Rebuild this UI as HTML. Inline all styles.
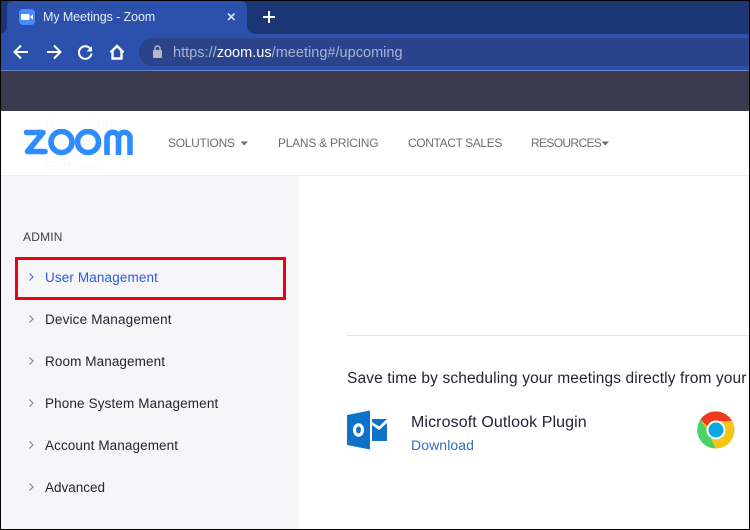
<!DOCTYPE html>
<html><head><meta charset="utf-8">
<style>
*{box-sizing:border-box}
html,body{margin:0;padding:0}
body{width:750px;height:530px;position:relative;overflow:hidden;background:#fff;font-family:"Liberation Sans",sans-serif}
.a{position:absolute;white-space:nowrap}
.nav{font-size:12px;color:#6e6e72;top:135px;line-height:16px}
.side{font-size:13.5px;color:#232333;left:45px;line-height:18px}
.ch{position:absolute;left:28px}
</style></head><body>
<div class="a" style="left:0;top:0;width:750px;height:34px;background:#1c3675"></div>
<div class="a" style="left:0;top:34px;width:750px;height:37px;background:#2b51ad"></div>
<div class="a" style="left:0;top:70px;width:750px;height:1px;background:#6480c8"></div>
<div class="a" style="left:0;top:71px;width:750px;height:40px;background:#3a3a4c"></div>
<!-- tab -->
<svg class="a" style="left:0;top:0" width="260" height="36">
<path d="M0 34 Q6 33 7 27 V8 Q7 1 14 1 H240 Q247 1 247 8 V27 Q248 33 255 34 Z" fill="#2b51ad"/>
<rect x="19" y="9" width="16" height="16" rx="4" fill="#4a8cff"/>
<path d="M22 14 h6.500 a1 1 0 0 1 1 1 v4 a1 1 0 0 1 -1 1 h-6.500 a1 1 0 0 1 -1 -1 v-4 a1 1 0 0 1 1 -1z M30.500 16.500 l2.500 -2 v5 l-2.500 -2z" fill="#fff"/>
<path d="M228 13.500 l6.500 6.500 M234.500 13.500 l-6.500 6.500" stroke="#e8ecf8" stroke-width="1.500"/>
</svg>
<svg class="a" style="left:260px;top:8px" width="18" height="18"><path d="M9 3 V15 M3 9 H15" stroke="#fff" stroke-width="2"/></svg>
<div class="a" style="left:43px;top:9px;font-size:12.500px;line-height:16px;color:#e6ebf8;letter-spacing:-.1px">My Meetings - Zoom</div>
<!-- toolbar icons -->
<svg class="a" style="left:10px;top:40px" width="120" height="24" fill="none" stroke="#fff" stroke-width="2">
<path d="M18 12 H5 M11 5.500 L4.500 12 L11 18.500"/>
<path d="M37 12 H50 M44 5.500 L50.500 12 L44 18.500"/>
<path d="M80.500 9 A6.300 6.300 0 1 0 81.500 13.500"/>
<path d="M82 6 V11.500 H76.500 Z" fill="#fff" stroke="none"/>
<path d="M100.500 12.500 L107 6 L113.500 12.500 M102.500 11 V18.500 H111.500 V11" stroke-width="2.400"/>
</svg>
<!-- omnibox -->
<div class="a" style="left:139px;top:38px;width:611px;height:28px;background:#2a438a;border-radius:14px 0 0 14px"></div>
<svg class="a" style="left:152px;top:45px" width="12" height="14"><rect x="1" y="5" width="9" height="8" rx="1" fill="#b4b8c4"/><path d="M3 5.500 V3.500 a2.500 2.500 0 0 1 5 0 V5.500" fill="none" stroke="#b4b8c4" stroke-width="1.400"/></svg>
<div class="a" style="left:173px;top:45px;font-size:14.500px;line-height:17px;color:#a9b4d4;letter-spacing:.02px">https://<span style="color:#fff">zoom.us</span>/meeting#/upcoming</div>
<!-- header -->
<div class="a" style="left:0;top:175px;width:750px;height:1px;background:#ededf1"></div>
<div class="a" style="left:45px;top:116px;font-size:15px;color:#fafafb;line-height:18px">Recordings</div>
<div class="a" style="left:45px;top:158px;font-size:15px;color:#fafafb;line-height:18px">Settings</div>
<svg class="a" style="left:23px;top:129px" width="112" height="27" fill="none" stroke="#2d8cff" stroke-width="5.600">
<path d="M3.500 3.500 H20 L4.500 22.500 H22" stroke-linejoin="round" stroke-linecap="round"/>
<circle cx="38.500" cy="13" r="10.500"/>
<circle cx="65" cy="13" r="10.500"/>
<path d="M84 26 V9 A5.750 5.750 0 0 1 95.500 9 V26 M95.500 9 A5.750 5.750 0 0 1 107 9 V26"/>
</svg>
<div class="a nav" style="left:168px;letter-spacing:-.3px">SOLUTIONS</div>
<svg class="a" style="left:240px;top:141px" width="9" height="5"><path d="M0.500 0.500 H8 L4.250 4.500Z" fill="#6e6e72"/></svg>
<div class="a nav" style="left:278px;letter-spacing:-.25px">PLANS &amp; PRICING</div>
<div class="a nav" style="left:408px;letter-spacing:-.38px">CONTACT SALES</div>
<div class="a nav" style="left:531px;letter-spacing:-.65px">RESOURCES</div>
<svg class="a" style="left:601px;top:141px" width="9" height="5"><path d="M0.500 0.500 H8 L4.250 4.500Z" fill="#6e6e72"/></svg>
<!-- sidebar -->
<div class="a" style="left:0;top:176px;width:299px;height:354px;background:#f6f6f9"></div>
<div class="a" style="left:23px;top:230px;font-size:12px;line-height:15px;color:#3d3d4a;letter-spacing:.2px">ADMIN</div>
<div class="a" style="left:15px;top:257px;width:271px;height:43px;border:3px solid #ee0010"></div>
<svg class="ch" style="top:272px" width="7" height="10"><path d="M1.500 1.500 L5 5 L1.500 8.500" fill="none" stroke="#4a6fe0" stroke-width="1.100"/></svg>
<div class="a side" style="top:269px;color:#2d5ae0;letter-spacing:.13px">User Management</div>
<svg class="ch" style="top:314px" width="7" height="10"><path d="M1.500 1.500 L5 5 L1.500 8.500" fill="none" stroke="#85858f" stroke-width="1.100"/></svg>
<div class="a side" style="top:311px;letter-spacing:.17px">Device Management</div>
<svg class="ch" style="top:356px" width="7" height="10"><path d="M1.500 1.500 L5 5 L1.500 8.500" fill="none" stroke="#85858f" stroke-width="1.100"/></svg>
<div class="a side" style="top:353px;letter-spacing:.1px">Room Management</div>
<svg class="ch" style="top:398px" width="7" height="10"><path d="M1.500 1.500 L5 5 L1.500 8.500" fill="none" stroke="#85858f" stroke-width="1.100"/></svg>
<div class="a side" style="top:395px;letter-spacing:.13px">Phone System Management</div>
<svg class="ch" style="top:440px" width="7" height="10"><path d="M1.500 1.500 L5 5 L1.500 8.500" fill="none" stroke="#85858f" stroke-width="1.100"/></svg>
<div class="a side" style="top:437px;letter-spacing:.1px">Account Management</div>
<svg class="ch" style="top:482px" width="7" height="10"><path d="M1.500 1.500 L5 5 L1.500 8.500" fill="none" stroke="#85858f" stroke-width="1.100"/></svg>
<div class="a side" style="top:479px">Advanced</div>
<!-- main -->
<div class="a" style="left:347px;top:335px;width:403px;height:1px;background:#e4e4ea"></div>
<div class="a" style="left:347px;top:369px;font-size:15.500px;line-height:19px;color:#232333;letter-spacing:.12px">Save time by scheduling your meetings directly from your</div>
<svg class="a" style="left:347px;top:410px" width="42" height="40">
<path d="M0 5 L23 0.500 V39.500 L0 35Z" fill="#0e72c9"/>
<ellipse cx="11.500" cy="20" rx="4" ry="5.200" fill="none" stroke="#fff" stroke-width="3.200"/>
<path d="M25 9 H40 L32 16.500 L25 12Z M25 15 L32 20 L40 13 V31 H25Z" fill="#0e72c9"/>
</svg>
<div class="a" style="left:411px;top:413px;font-size:16px;line-height:19px;color:#232333;letter-spacing:.1px">Microsoft Outlook Plugin</div>
<div class="a" style="left:411px;top:436px;font-size:14px;line-height:18px;color:#2d6fc4;letter-spacing:.1px">Download</div>
<svg class="a" style="left:697px;top:411px" width="38" height="38" viewBox="0 0 38 38">
<circle cx="19" cy="19" r="18.500" fill="#f5c518"/>
<path d="M19 .5 A18.500 18.500 0 0 1 35 10 L19 10 A9 9 0 0 0 10 15 L3.500 8.500 A18.500 18.500 0 0 1 19 .5Z" fill="#ee3a1e"/>
<path d="M3.500 8.500 L12 23 L18.500 37.500 A18.500 18.500 0 0 1 3.500 8.500Z" fill="#4dd269"/>
<circle cx="19" cy="19" r="9.500" fill="#fff"/><circle cx="19" cy="19" r="7.500" fill="#0aa9e2"/>
</svg>
<!-- frame -->
<div class="a" style="left:0;top:0;width:750px;height:530px;border:1px solid #000;"></div>
</body></html>
